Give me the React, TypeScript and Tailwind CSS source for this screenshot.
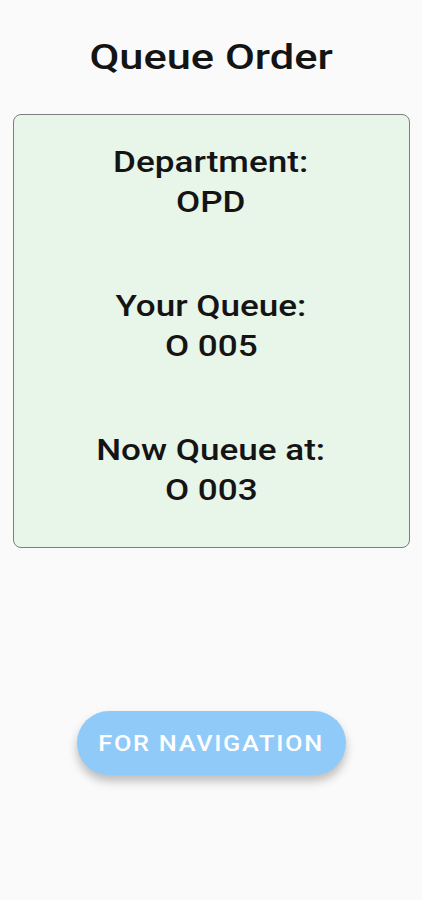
import React from "react";

const rows = [
  { label: "Department:", value: "OPD" },
  { label: "Your Queue:", value: "O 005" },
  { label: "Now Queue at:", value: "O 003" },
];

export default function App() {
  return (
    <div className="min-h-[900px] w-full bg-[#fafafa] flex flex-col items-center font-['Roboto',sans-serif] text-[#141414]">
      <h1 className="mt-[34px] text-[35px] leading-[48px] font-medium">
        <span className="inline-block scale-x-[1.24]">Queue Order</span>
      </h1>
      <div className="mt-[32px] w-[397px] h-[434px] rounded-[8px] border border-[#7d7d7d] bg-[#e8f5e9] flex flex-col items-center pt-[27px] gap-[64px]">
        {rows.map((r) => (
          <div key={r.label} className="flex flex-col items-center text-[29px] leading-[40px] font-medium">
            <span className="inline-block scale-x-[1.21]">{r.label}</span>
            <span className="inline-block scale-x-[1.21]">{r.value}</span>
          </div>
        ))}
      </div>
      <button className="mt-[163px] w-[269px] h-[64px] rounded-full bg-[#90caf9] text-white text-[22px] leading-[28px] font-medium tracking-[1.5px] shadow-[0_6px_10px_rgba(0,0,0,0.25)]">
        <span className="inline-block scale-x-[1.15] translate-y-px">FOR NAVIGATION</span>
      </button>
    </div>
  );
}
